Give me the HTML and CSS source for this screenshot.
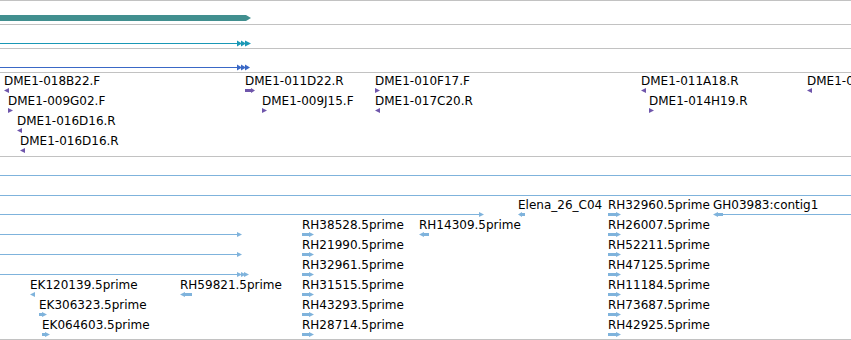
FILE: index.html
```html
<!DOCTYPE html>
<html>
<head>
<meta charset="utf-8">
<link rel="stylesheet" href="styles.css">
</head>
<body>
<div class="view">
  <div class="track t-bar">
    <svg class="fig teal" width="251" height="6" viewBox="0 0 251 6"><rect x="0" y="0" width="246" height="6"/><polygon points="246,0 251,3 246,6"/></svg>
  </div>
  <div class="track t-line">
    <svg class="fig cyan" width="252" height="7" viewBox="0 0 252 7"><rect x="0" y="3" width="238" height="1"/><polygon points="237,0.5 242,3.5 237,6.5"/><polygon points="241,0.5 246,3.5 241,6.5"/><polygon points="245,0.5 251,3.5 245,6.5"/></svg>
  </div>
  <div class="track t-line">
    <svg class="fig blue" width="252" height="7" viewBox="0 0 252 7"><rect x="0" y="3" width="238" height="1"/><polygon points="237,0.5 242,3.5 237,6.5"/><polygon points="241,0.5 246,3.5 241,6.5"/><polygon points="245,0.5 250,3.5 245,6.5"/></svg>
  </div>

  <div class="track t-dme">
    <div class="row">
      <div class="feat" style="left:4px"><span class="lbl">DME1-018B22.F</span><svg class="g purple" width="5" height="5" viewBox="0 0 5 5"><polygon points="0,2.5 5,0 5,5"/></svg></div>
      <div class="feat" style="left:245px"><span class="lbl">DME1-011D22.R</span><svg class="g purple" width="10" height="5" viewBox="0 0 10 5"><polygon points="0,1 6,1 6,0 10,2.5 6,5 6,4 0,4"/></svg></div>
      <div class="feat" style="left:375px"><span class="lbl">DME1-010F17.F</span><svg class="g purple" width="5" height="5" viewBox="0 0 5 5"><polygon points="0,0 5,2.5 0,5"/></svg></div>
      <div class="feat" style="left:641px"><span class="lbl">DME1-011A18.R</span><svg class="g purple" width="5" height="5" viewBox="0 0 5 5"><polygon points="0,2.5 5,0 5,5"/></svg></div>
      <div class="feat" style="left:807px"><span class="lbl">DME1-014C02.R</span><svg class="g purple" width="5" height="5" viewBox="0 0 5 5"><polygon points="0,2.5 5,0 5,5"/></svg></div>
    </div>
    <div class="row">
      <div class="feat" style="left:8px"><span class="lbl">DME1-009G02.F</span><svg class="g purple" width="5" height="5" viewBox="0 0 5 5"><polygon points="0,0 5,2.5 0,5"/></svg></div>
      <div class="feat" style="left:262px"><span class="lbl">DME1-009J15.F</span><svg class="g purple" width="5" height="5" viewBox="0 0 5 5"><polygon points="0,0 5,2.5 0,5"/></svg></div>
      <div class="feat" style="left:375px"><span class="lbl">DME1-017C20.R</span><svg class="g purple" width="5" height="5" viewBox="0 0 5 5"><polygon points="0,2.5 5,0 5,5"/></svg></div>
      <div class="feat" style="left:649px"><span class="lbl">DME1-014H19.R</span><svg class="g purple" width="5" height="5" viewBox="0 0 5 5"><polygon points="0,0 5,2.5 0,5"/></svg></div>
    </div>
    <div class="row">
      <div class="feat" style="left:17px"><span class="lbl">DME1-016D16.R</span><svg class="g purple" width="5" height="5" viewBox="0 0 5 5"><polygon points="0,2.5 5,0 5,5"/></svg></div>
    </div>
    <div class="row">
      <div class="feat" style="left:20px"><span class="lbl">DME1-016D16.R</span><svg class="g purple" width="5" height="5" viewBox="0 0 5 5"><polygon points="0,2.5 5,0 5,5"/></svg></div>
    </div>
  </div>

  <div class="track t-est">
    <div class="row">
      <div class="feat" style="left:0"><span class="lbl"></span><svg class="g lb" width="851" height="5" viewBox="0 0 851 5"><rect x="0" y="3" width="851" height="1"/></svg></div>
    </div>
    <div class="row">
      <div class="feat" style="left:0"><span class="lbl"></span><svg class="g lb" width="851" height="5" viewBox="0 0 851 5"><rect x="0" y="3" width="851" height="1"/></svg></div>
    </div>
    <div class="row">
      <div class="feat" style="left:0"><span class="lbl"></span><svg class="g lb" width="485" height="5" viewBox="0 0 485 5"><rect x="0" y="2" width="480" height="1"/><polygon points="479,0 484,2.5 479,5"/></svg></div>
      <div class="feat" style="left:518px"><span class="lbl">Elena_26_C04</span><svg class="g lb" width="7" height="5" viewBox="0 0 7 5"><polygon points="0,2.5 4,0 4,1 7,1 7,4 4,4 4,5"/></svg></div>
      <div class="feat" style="left:608px"><span class="lbl">RH32960.5prime</span><svg class="g lb" width="13" height="5" viewBox="0 0 13 5"><polygon points="0,1 8,1 8,0 13,2.5 8,5 8,4 0,4"/></svg></div>
      <div class="feat" style="left:713px"><span class="lbl">GH03983:contig1</span><svg class="g lb" width="138" height="5" viewBox="0 0 138 5"><polygon points="0,2.5 5,0 5,1 10,1 10,4 5,4 5,5"/><rect x="10" y="2" width="128" height="1"/></svg></div>
    </div>
    <div class="row">
      <div class="feat" style="left:0"><span class="lbl"></span><svg class="g lb" width="243" height="5" viewBox="0 0 243 5"><rect x="0" y="2" width="238" height="1"/><polygon points="237,0 242,2.5 237,5"/></svg></div>
      <div class="feat" style="left:302px"><span class="lbl">RH38528.5prime</span><svg class="g lb" width="12" height="5" viewBox="0 0 12 5"><polygon points="0,1 7,1 7,0 12,2.5 7,5 7,4 0,4"/></svg></div>
      <div class="feat" style="left:419px"><span class="lbl">RH14309.5prime</span><svg class="g lb" width="10" height="5" viewBox="0 0 10 5"><polygon points="0,2.5 5,0 5,1 10,1 10,4 5,4 5,5"/></svg></div>
      <div class="feat" style="left:608px"><span class="lbl">RH26007.5prime</span><svg class="g lb" width="13" height="5" viewBox="0 0 13 5"><polygon points="0,1 8,1 8,0 13,2.5 8,5 8,4 0,4"/></svg></div>
    </div>
    <div class="row">
      <div class="feat" style="left:0"><span class="lbl"></span><svg class="g lb" width="243" height="5" viewBox="0 0 243 5"><rect x="0" y="2" width="238" height="1"/><polygon points="237,0 242,2.5 237,5"/></svg></div>
      <div class="feat" style="left:302px"><span class="lbl">RH21990.5prime</span><svg class="g lb" width="12" height="5" viewBox="0 0 12 5"><polygon points="0,1 7,1 7,0 12,2.5 7,5 7,4 0,4"/></svg></div>
      <div class="feat" style="left:608px"><span class="lbl">RH52211.5prime</span><svg class="g lb" width="13" height="5" viewBox="0 0 13 5"><polygon points="0,1 8,1 8,0 13,2.5 8,5 8,4 0,4"/></svg></div>
    </div>
    <div class="row">
      <div class="feat" style="left:0"><span class="lbl"></span><svg class="g lb" width="250" height="5" viewBox="0 0 250 5"><rect x="0" y="2" width="238" height="1"/><polygon points="237,0 242,2.5 237,5"/><polygon points="241,0 246,2.5 241,5"/><polygon points="244,0 249,2.5 244,5"/></svg></div>
      <div class="feat" style="left:302px"><span class="lbl">RH32961.5prime</span><svg class="g lb" width="12" height="5" viewBox="0 0 12 5"><polygon points="0,1 7,1 7,0 12,2.5 7,5 7,4 0,4"/></svg></div>
      <div class="feat" style="left:608px"><span class="lbl">RH47125.5prime</span><svg class="g lb" width="13" height="5" viewBox="0 0 13 5"><polygon points="0,1 8,1 8,0 13,2.5 8,5 8,4 0,4"/></svg></div>
    </div>
    <div class="row">
      <div class="feat" style="left:30px"><span class="lbl">EK120139.5prime</span><svg class="g lb" width="5" height="5" viewBox="0 0 5 5"><polygon points="0,2.5 5,0 5,5"/></svg></div>
      <div class="feat" style="left:180px"><span class="lbl">RH59821.5prime</span><svg class="g lb" width="12" height="5" viewBox="0 0 12 5"><polygon points="0,2.5 5,0 5,1 12,1 12,4 5,4 5,5"/></svg></div>
      <div class="feat" style="left:302px"><span class="lbl">RH31515.5prime</span><svg class="g lb" width="12" height="5" viewBox="0 0 12 5"><polygon points="0,1 7,1 7,0 12,2.5 7,5 7,4 0,4"/></svg></div>
      <div class="feat" style="left:608px"><span class="lbl">RH11184.5prime</span><svg class="g lb" width="13" height="5" viewBox="0 0 13 5"><polygon points="0,1 8,1 8,0 13,2.5 8,5 8,4 0,4"/></svg></div>
    </div>
    <div class="row">
      <div class="feat" style="left:39px"><span class="lbl">EK306323.5prime</span><svg class="g lb" width="8" height="5" viewBox="0 0 8 5"><polygon points="0,1 3,1 3,0 8,2.5 3,5 3,4 0,4"/></svg></div>
      <div class="feat" style="left:302px"><span class="lbl">RH43293.5prime</span><svg class="g lb" width="12" height="5" viewBox="0 0 12 5"><polygon points="0,1 7,1 7,0 12,2.5 7,5 7,4 0,4"/></svg></div>
      <div class="feat" style="left:608px"><span class="lbl">RH73687.5prime</span><svg class="g lb" width="13" height="5" viewBox="0 0 13 5"><polygon points="0,1 8,1 8,0 13,2.5 8,5 8,4 0,4"/></svg></div>
    </div>
    <div class="row">
      <div class="feat" style="left:42px"><span class="lbl">EK064603.5prime</span><svg class="g lb" width="8" height="5" viewBox="0 0 8 5"><polygon points="0,1 3,1 3,0 8,2.5 3,5 3,4 0,4"/></svg></div>
      <div class="feat" style="left:302px"><span class="lbl">RH28714.5prime</span><svg class="g lb" width="12" height="5" viewBox="0 0 12 5"><polygon points="0,1 7,1 7,0 12,2.5 7,5 7,4 0,4"/></svg></div>
      <div class="feat" style="left:608px"><span class="lbl">RH42925.5prime</span><svg class="g lb" width="13" height="5" viewBox="0 0 13 5"><polygon points="0,1 8,1 8,0 13,2.5 8,5 8,4 0,4"/></svg></div>
    </div>
  </div>
</div>
</body>
</html>
```

FILE: styles.css
```css
html, body {
  margin: 0;
  padding: 0;
  background: #ffffff;
}

body {
  font-family: "DejaVu Sans", "Liberation Sans", sans-serif;
  font-size: 12px;
  color: #000000;
  width: 851px;
  height: 340px;
  overflow: hidden;
}

.view {
  border-top: 1px solid #c2c2c2;
  width: 851px;
}

.track {
  position: relative;
  border-bottom: 1px solid #c2c2c2;
  overflow: hidden;
}

.t-bar {
  height: 24px;
  padding-top: 14px;
  box-sizing: border-box;
}

.t-line {
  height: 24px;
  padding-top: 15px;
  box-sizing: border-box;
}

.t-dme {
  height: 84px;
  box-sizing: border-box;
}

.t-est {
  height: 183px;
  box-sizing: border-box;
}

.fig {
  display: block;
}

.row {
  position: relative;
  height: 20px;
}

.feat {
  position: absolute;
  top: 0;
}

.lbl {
  display: block;
  height: 15px;
  line-height: 17px;
  white-space: nowrap;
}

.g {
  display: block;
}

.teal { fill: #418f8f; }
.cyan { fill: #1a98b6; }
.blue { fill: #3a68c6; }
.purple { fill: #6f56ab; }
.lb { fill: #7fb3dc; }
```
